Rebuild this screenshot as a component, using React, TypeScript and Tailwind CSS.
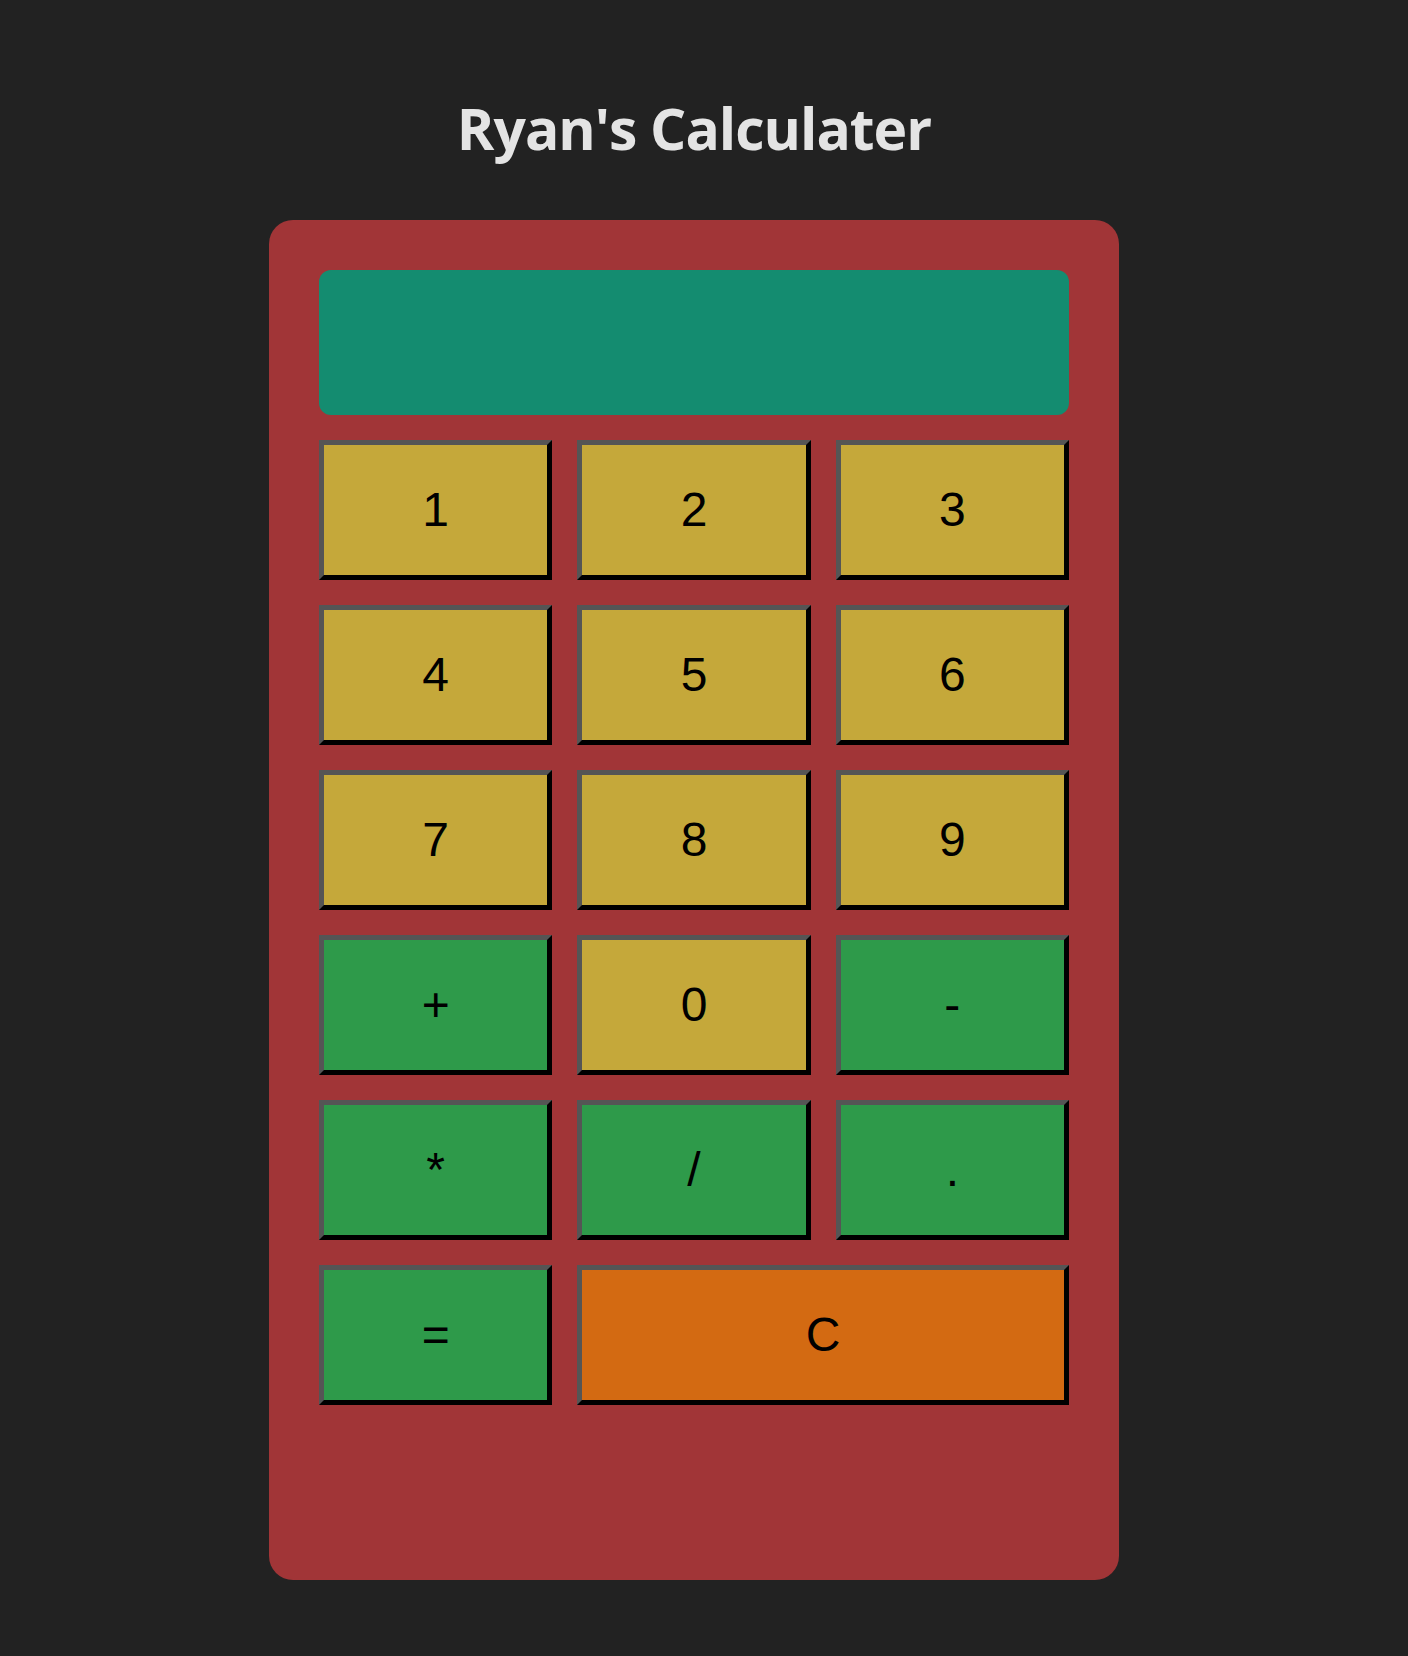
import React, { useState } from 'react';

type Key = { label: string; kind: 'num' | 'op' | 'clear'; wide?: boolean };

const keys: Key[] = [
  { label: '1', kind: 'num' },
  { label: '2', kind: 'num' },
  { label: '3', kind: 'num' },
  { label: '4', kind: 'num' },
  { label: '5', kind: 'num' },
  { label: '6', kind: 'num' },
  { label: '7', kind: 'num' },
  { label: '8', kind: 'num' },
  { label: '9', kind: 'num' },
  { label: '+', kind: 'op' },
  { label: '0', kind: 'num' },
  { label: '-', kind: 'op' },
  { label: '*', kind: 'op' },
  { label: '/', kind: 'op' },
  { label: '.', kind: 'op' },
  { label: '=', kind: 'op' },
  { label: 'C', kind: 'clear', wide: true },
];

const colorFor = (kind: Key['kind']) => {
  switch (kind) {
    case 'num': return 'bg-[#c5a83a]';
    case 'op': return 'bg-[#2e9a4a]';
    default: return 'bg-[#d36a12]';
  }
};

export default function App() {
  const [value, setValue] = useState('');

  const press = (k: Key) => {
    if (k.kind === 'clear') return setValue('');
    if (k.label === '=') {
      try {
        // simple evaluation of the typed expression
        const out = Function(`"use strict";return (${value || '0'})`)();
        setValue(String(out));
      } catch {
        setValue('Error');
      }
      return;
    }
    setValue((v) => v + k.label);
  };

  return (
    <div className="min-h-screen bg-[#222222]">
      <div className="w-[1388px] flex flex-col items-center">
        <h1 className="mt-[92px] text-[57px] leading-[72px] tracking-[-1px] font-bold text-[#e4e4e4] font-['Open_Sans',_'Noto_Sans',_sans-serif]">
          Ryan's Calculater
        </h1>

        <div className="mt-[56px] w-[850px] h-[1360px] rounded-[24px] bg-[#a13537] p-[50px]">
          <div className="h-[145px] rounded-[12px] bg-[#148c70] flex items-center justify-end px-6 text-[48px] text-black font-['Liberation_Sans',_Arial,_sans-serif]">
            {value}
          </div>

          <div className="mt-[25px] grid grid-cols-3 gap-[25px] auto-rows-[140px]">
            {keys.map((k) => (
              <button
                key={k.label}
                onClick={() => press(k)}
                className={`${colorFor(k.kind)} ${k.wide ? 'col-span-2' : ''} border-[5px] border-t-[#555555] border-l-[#555555] border-b-black border-r-black text-[48px] text-black font-['Liberation_Sans',_Arial,_sans-serif] flex items-center justify-center`}
              >
                {k.label}
              </button>
            ))}
          </div>
        </div>
      </div>
    </div>
  );
}
